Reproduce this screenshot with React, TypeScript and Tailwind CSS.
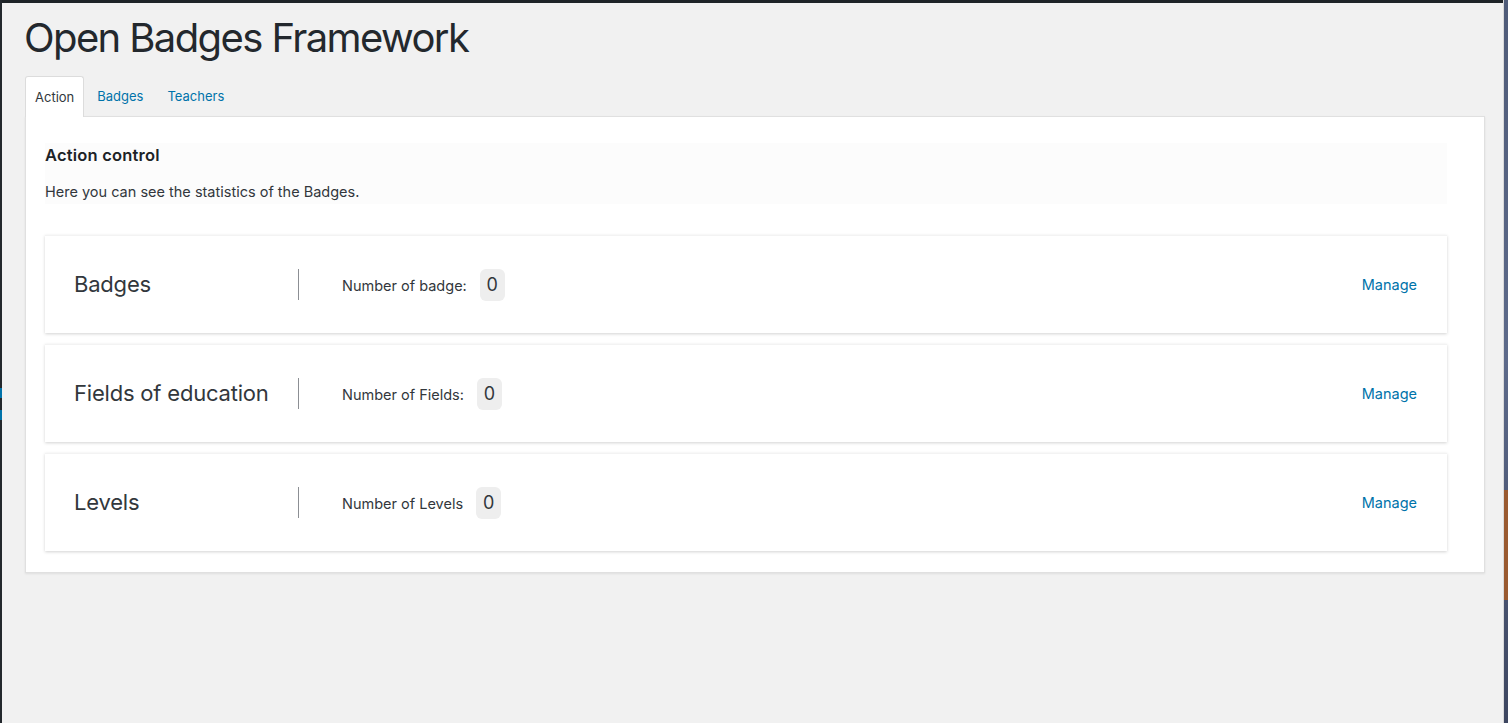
import React from "react";

const font = { fontFamily: "Inter, 'Helvetica Neue', Arial, sans-serif" };

function Card({ title, label, value }: { title: string; label: string; value: string }) {
  return (
    <div className="flex h-[98px] items-center bg-white shadow-[0_1px_3px_rgba(0,0,0,0.18)] border-t border-[#f3f3f3]">
      <div className="w-[253px] pl-[29px] text-[22px] text-[#32373c] tracking-[-0.2px]">{title}</div>
      <div className="h-[31px] w-px bg-[#8c8f94]" />
      <div className="ml-[43px] flex items-center text-[14.5px] text-[#32373c]">
        <span className="mt-[2px]">{label}</span>
        <span className="ml-[13px] flex h-[32px] min-w-[25px] items-center justify-center rounded-[6px] bg-[#eeeeee] px-[6px] text-[18px] text-[#32373c]">
          {value}
        </span>
      </div>
      <div className="ml-auto pr-[30px] text-[14.5px] text-[#0073aa]">Manage</div>
    </div>
  );
}

export default function App() {
  return (
    <div className="relative h-[723px] w-[1508px] overflow-hidden bg-[#f1f1f1]" style={font}>
      <div className="absolute left-0 top-0 h-[3px] w-full bg-[#1e2327]" />
      <div className="absolute left-0 top-0 h-full w-[2px] bg-[#23282d]">
        <div className="mt-[388px] h-[10px] w-full bg-[#0073aa]" />
        <div className="mt-[12px] h-[10px] w-full bg-[#0073aa]" />
      </div>
      <div className="absolute right-0 top-0 h-full w-[4px] bg-gradient-to-b from-[#4f5b78] via-[#5d6a8a] to-[#3d4660]">
        <div className="mt-[490px] h-[110px] w-full bg-[#9a5a30]" />
      </div>
      <div className="absolute right-[4px] top-0 h-full w-px bg-[#d9d9d9]" />

      <div className="pl-[24px] pt-[14px]">
        <h1 className="text-[40px] leading-[48px] text-[#23282d] tracking-[-1.6px]">Open Badges Framework</h1>
        <div className="mt-[14px] flex items-end text-[13px]">
          <div className="relative z-10 -mb-px ml-px flex h-[41px] items-center rounded-t-[3px] border border-b-0 border-[#dcdcdc] bg-white px-[9px] text-[#32373c]">
            <span className="mt-[2px]">Action</span>
          </div>
          <div className="flex h-[40px] items-center px-[13px] pt-[2px] text-[#0073aa]">Badges</div>
          <div className="flex h-[40px] items-center px-[11px] pt-[2px] text-[#0073aa]">Teachers</div>
        </div>
        <div className="ml-px w-[1460px] border border-[#e0e0e0] bg-white pb-[21px] pl-[19px] pr-[37px] pt-[26px] shadow-[0_1px_2px_rgba(0,0,0,0.08)]">
          <div className="bg-[#fcfcfc] pb-[2px] pt-[0px]">
            <div className="text-[16.5px] font-semibold text-[#1d2327] leading-[24px] tracking-[0.2px]">Action control</div>
            <div className="mt-[15px] text-[14.5px] text-[#32373c] leading-[20px]">Here you can see the statistics of the Badges.</div>
          </div>
          <div className="mt-[31px] flex flex-col gap-[11px]">
            <Card title="Badges" label="Number of badge:" value="0" />
            <Card title="Fields of education" label="Number of Fields:" value="0" />
            <Card title="Levels" label="Number of Levels" value="0" />
          </div>
        </div>
      </div>
    </div>
  );
}
